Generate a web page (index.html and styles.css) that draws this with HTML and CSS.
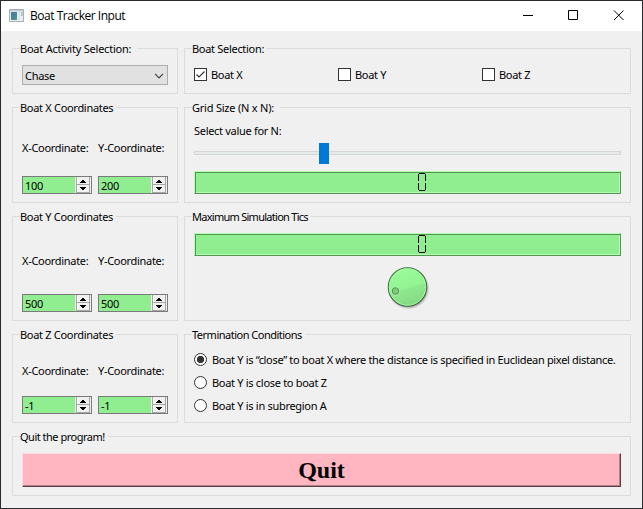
FILE: index.html
```html
<!DOCTYPE html>
<html lang="en">
<head>
<meta charset="utf-8">
<title>Boat Tracker Input</title>
<link rel="stylesheet" href="styles.css">
</head>
<body>
<svg width="0" height="0" class="defs">
  <defs>
    <g id="spin">
      <path d="M0 0H16V16H0z" fill="#f0f0f0"/>
      <path d="M1.5 0V15.5M1 7.5H15M1 15.5H15M14.5 0V16" stroke="#a6a6a6" fill="none"/>
      <path d="M2.5 1V7M2.5 9V15" stroke="#fff"/>
      <path d="M7 3h2v1h1v1h1v1H5V5h1V4h1zM5 10h6v1h-1v1H9v1H7v-1H6v-1H5z" fill="#000"/>
    </g>
    <g id="zero">
      <path d="M1 .5H7M1 17.5H7" stroke="#000"/>
      <path d="M.5 1V8M7.5 1V8M.5 10V17M7.5 10V17" stroke="#000"/>
    </g>
  </defs>
</svg>
<div class="window">
  <header class="titlebar">
    <svg class="appicon" width="15" height="13" viewBox="0 0 15 13">
      <defs><linearGradient id="ig" x2="1" y2="1"><stop offset="0" stop-color="#3f77a8"/><stop offset="1" stop-color="#4a9a80"/></linearGradient></defs>
      <path d="M.5.5h14v12H.5z" fill="#eef1f3" stroke="#a3adb3"/>
      <path d="M1 1h13v1.5H1z" fill="#c3ced6"/>
      <path d="M2 3h6v8H2z" fill="url(#ig)"/>
      <path d="M9 3h2v8H9z" fill="#dce6ea"/><path d="M12 3h1.5v4H12z" fill="#9fb9bd"/>
    </svg>
    <h1>Boat Tracker Input</h1>
    <svg class="controls" width="102" height="12" viewBox="0 0 102 12">
      <path d="M0 5.5h10M45.500.5h9v9h-9z" stroke="#000" fill="none"/>
      <path d="M91 .5l9.500 9.500M100.500 .5L91 10" stroke="#000" fill="none"/>
    </svg>
  </header>
  <main class="grid">
    <section class="group"><h2 class="loose">Boat Activity Selection:</h2>
      <div class="combo"><span>Chase</span><svg width="10" height="6" viewBox="0 0 10 6"><path d="M1 .8L5 4.800L9 .8" fill="none" stroke="#444" stroke-width="1.200"/></svg></div>
    </section>
    <section class="group"><h2>Boat Selection:</h2>
      <div class="checks">
        <label><i class="box"><svg width="11" height="11" viewBox="0 0 11 11"><path d="M1.500 5.500L4 8L9.500 2.500" fill="none" stroke="#333" stroke-width="1.200"/></svg></i>Boat X</label>
        <label><i class="box"></i>Boat Y</label>
        <label><i class="box"></i>Boat Z</label>
      </div>
    </section>

    <section class="group coords coords-x"><h2>Boat X Coordinates</h2>
      <div class="fields">
        <label>X-Coordinate:</label><label>Y-Coordinate:</label>
        <div class="spin"><span>100</span><svg width="16" height="16"><use href="#spin"/></svg></div>
        <div class="spin"><span>200</span><svg width="16" height="16"><use href="#spin"/></svg></div>
      </div>
    </section>
    <section class="group size"><h2 class="loose">Grid Size (N x N):</h2>
      <p>Select value for N:</p>
      <div class="slider"><div class="groove"></div><div class="handle"></div></div>
      <div class="lcd"><svg width="8" height="18"><use href="#zero"/></svg></div>
    </section>

    <section class="group coords coords-y"><h2>Boat Y Coordinates</h2>
      <div class="fields">
        <label>X-Coordinate:</label><label>Y-Coordinate:</label>
        <div class="spin"><span>500</span><svg width="16" height="16"><use href="#spin"/></svg></div>
        <div class="spin"><span>500</span><svg width="16" height="16"><use href="#spin"/></svg></div>
      </div>
    </section>
    <section class="group tics"><h2 class="tight">Maximum Simulation Tics</h2>
      <div class="lcd"><svg width="8" height="18"><use href="#zero"/></svg></div>
      <svg class="dial" width="44" height="44" viewBox="0 0 44 44">
        <defs>
          <linearGradient id="dg" x1=".35" y1="0" x2=".65" y2="1"><stop offset="0" stop-color="#98fb98"/><stop offset=".5" stop-color="#94f494"/><stop offset=".55" stop-color="#8ee98e"/><stop offset="1" stop-color="#83d783"/></linearGradient>
          <radialGradient id="ds"><stop offset=".85" stop-color="#000" stop-opacity=".3"/><stop offset="1" stop-color="#000" stop-opacity="0"/></radialGradient>
        </defs>
        <circle cx="22.500" cy="22.500" r="21" fill="url(#ds)"/>
        <circle cx="21.500" cy="21" r="19.200" fill="url(#dg)" stroke="#40663f" stroke-width="1.100"/>
        <circle cx="21.500" cy="21" r="18.200" fill="none" stroke="#a4ffa4" stroke-width=".8"/>
        <circle cx="9.500" cy="25" r="4.200" fill="none" stroke="#b0f5b0" stroke-width=".8"/>
        <circle cx="9.500" cy="25" r="3.300" fill="#7bcb7b" stroke="#569056"/>
      </svg>
    </section>

    <section class="group coords coords-z"><h2>Boat Z Coordinates</h2>
      <div class="fields">
        <label>X-Coordinate:</label><label>Y-Coordinate:</label>
        <div class="spin"><span>-1</span><svg width="16" height="16"><use href="#spin"/></svg></div>
        <div class="spin"><span>-1</span><svg width="16" height="16"><use href="#spin"/></svg></div>
      </div>
    </section>
    <section class="group"><h2 class="snug">Termination Conditions</h2>
      <div class="radios">
        <label><i class="radio on"></i><span class="long">Boat Y is “close” to boat X where the distance is specified in Euclidean pixel distance.</span></label>
        <label><i class="radio"></i>Boat Y is close to boat Z</label>
        <label><i class="radio"></i>Boat Y is in subregion A</label>
      </div>
    </section>

    <section class="group wide"><h2 class="snug">Quit the program!</h2>
      <button class="quit">Quit</button>
    </section>
  </main>
</div>
</body>
</html>
```

FILE: styles.css
```css
* { box-sizing: border-box; }
body { margin: 0; font: 11px/14px "Noto Sans", sans-serif; letter-spacing: -0.3px; color: #000; white-space: nowrap; }
.defs { position: absolute; }
.window { width: 643px; height: 509px; border: 1px solid #2b2b2d; background: #f0f0f0; overflow: hidden; }
.titlebar { height: 30px; background: #fff; display: flex; align-items: flex-start; padding: 7px 17px 0 8px; }
.appicon { margin-top: 1px; }
.titlebar h1 { margin: 0 auto 0 6px; font: 12px/16px "Open Sans", sans-serif; letter-spacing: -0.48px; }
.controls { margin-top: 2px; }
.grid { display: grid; grid-template-columns: 166px 447px; grid-template-rows: 46px 96px 105px 89px 60px; gap: 13px 6px; padding: 17px 11px 0; }
.group { position: relative; border: 1px solid #dcdcdc; padding: 0 9px; }
.group h2 { position: absolute; left: 7px; top: -7px; margin: 0; padding-right: 3px; font-size: 11px; font-weight: 400; line-height: 14px; background: #f0f0f0; }
.group h2.loose { letter-spacing: -0.22px; padding-right: 6px; }
.group h2.tight { letter-spacing: -0.73px; }
.group h2.snug { letter-spacing: -0.5px; }
.wide { grid-column: 1 / 3; }
.combo { margin-top: 16px; width: 146px; height: 20px; border: 1px solid #adadad; background: #e1e1e1; display: flex; align-items: center; justify-content: space-between; padding: 1px 3px 0 2px; }
.checks { display: grid; grid-template-columns: repeat(3, 144px); margin-top: 19px; }
.checks label, .radios label { display: flex; align-items: center; height: 13px; }
.box { width: 13px; height: 13px; border: 1px solid #333; background: #fff; margin-right: 4px; }
.box svg { display: block; }
.fields { display: grid; grid-template-columns: 70px 70px; column-gap: 6px; grid-template-rows: 14px 18px; }
.coords-x .fields { padding-top: 33px; row-gap: 21px; }
.coords-y .fields { padding-top: 37px; row-gap: 26px; }
.coords-z .fields { padding-top: 29px; row-gap: 18px; }
.spin { border: 1px solid #7a7a7a; background: #90ee90; display: flex; justify-content: space-between; line-height: 18px; padding-left: 2px; }
.size p { margin: 16px 0 0; }
.slider { height: 21px; margin-top: 5px; display: grid; align-items: center; }
.groove, .handle { grid-area: 1 / 1; }
.groove { height: 4px; border: 1px solid #d6d6d6; background: #e7eaea; margin-top: -1px; }
.handle { width: 10px; height: 21px; margin-left: 125px; background: #0078d7; }
.lcd { height: 23px; display: flex; justify-content: center; align-items: flex-start; padding-left: 28px; background: #90ee90; border: 1px solid; border-color: #b2ffb2 #569456 #569456 #b2ffb2; box-shadow: inset 1px 1px #569456, inset -1px -1px #b2ffb2; margin-top: 7px; }
.lcd svg { margin-top: 1px; }
.tics .lcd { margin-top: 16px; }
.dial { display: block; margin: 10px 0 0 192px; }
.radios { display: grid; gap: 10px; margin-top: 18px; }
.radio { width: 13px; height: 13px; border: 1px solid #333; border-radius: 50%; background: #fff; margin-right: 5px; }
.long { letter-spacing: -0.32px; }
.radio.on { background: radial-gradient(circle, #333 3.300px, #fff 4px); }
.quit { display: block; width: 599px; height: 34px; margin: 16px 0 0; padding: 0; background: #ffb6c1; border: 1px solid; border-color: #ffd9df #5b3f43 #5b3f43 #ffd9df; box-shadow: inset -1px -1px #b27f87; font: bold 24px/32px "Liberation Serif", serif; color: #000; }
```
